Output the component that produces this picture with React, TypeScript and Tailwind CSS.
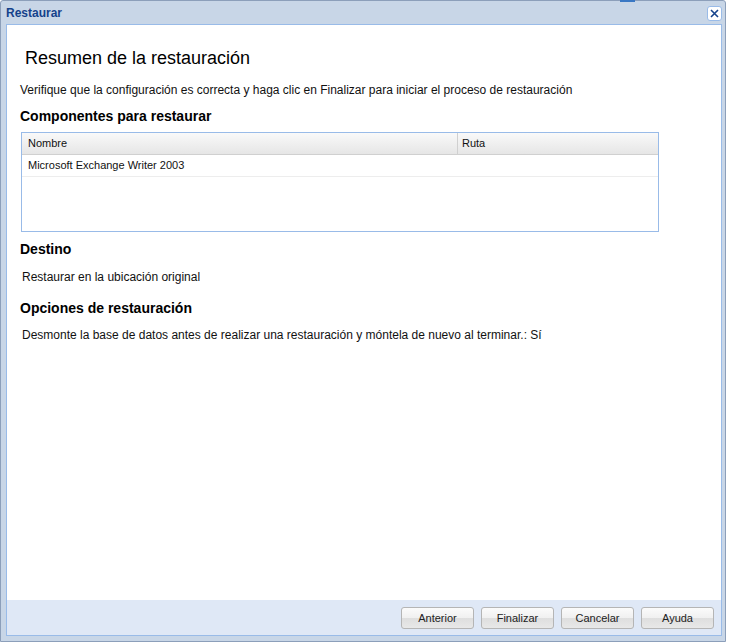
import React from "react";

const font = { fontFamily: '"Liberation Sans", Arial, sans-serif' };

function Btn({ label }: { label: string }) {
  return (
    <div className="w-[73px] h-[22px] rounded-[3px] border border-[#b5b5b5] bg-[linear-gradient(#fbfbfb_0%,#f0f0f0_50%,#dedede_51%,#e8e8e8_100%)] flex items-center justify-center text-[11px] text-[#222]">
      {label}
    </div>
  );
}

export default function App() {
  return (
    <div className="w-[729px] h-[643px] bg-white relative overflow-hidden" style={font}>
      <div className="absolute left-[620px] top-0 w-[15px] h-[2px] bg-[#3a78c4]" />
      <div className="w-[726px] h-[642px] border border-[#8c9fba] rounded-t-[3px] bg-[#c8d6e7] flex flex-col">
        <div className="h-[23px] flex items-center justify-between pl-[5px] pr-[3px]">
          <span className="text-[12px] font-bold text-[#15428b]">Restaurar</span>
          <div className="w-[15px] h-[15px] mt-[2px] rounded-[3px] border border-[#99bbe8] bg-white flex items-center justify-center">
            <svg width="9" height="9" viewBox="0 0 9 9">
              <path d="M1 1L8 8M8 1L1 8" stroke="#15428b" strokeWidth="1.6" />
            </svg>
          </div>
        </div>
        <div className="ml-[5px] w-[716px] h-[612px] border border-[#99bbe8] bg-white flex flex-col">
          <div className="flex-1 pl-[13px] pt-[23px] flex flex-col items-start text-black">
            <div className="ml-[5px] text-[18px] leading-[20px]">Resumen de la restauración</div>
            <div className="mt-[15px] text-[12px] leading-[14px] text-[#111]">
              Verifique que la configuración es correcta y haga clic en Finalizar para iniciar el proceso de restauración
            </div>
            <div className="mt-[11px] text-[14px] leading-[16px] font-bold">Componentes para restaurar</div>
            <div className="mt-[8px] ml-[1px] w-[638px] h-[100px] border border-[#99bbe8] flex flex-col">
              <div className="h-[22px] flex border-b border-[#d0d0d0] bg-[linear-gradient(#f9f9f9,#e6e6e6)] text-[11px] text-[#111]">
                <div className="w-[436px] border-r border-[#d0d0d0] pl-[6px] flex items-center">Nombre</div>
                <div className="flex-1 pl-[4px] flex items-center">Ruta</div>
              </div>
              <div className="h-[22px] flex items-center border-b border-[#ededed] pl-[6px] text-[11px] text-[#111]">
                Microsoft Exchange Writer 2003
              </div>
            </div>
            <div className="mt-[9px] text-[14px] leading-[16px] font-bold">Destino</div>
            <div className="mt-[13px] ml-[2px] text-[12px] leading-[14px] text-[#111]">Restaurar en la ubicación original</div>
            <div className="mt-[16px] text-[14px] leading-[16px] font-bold">Opciones de restauración</div>
            <div className="mt-[12px] ml-[2px] text-[12px] leading-[14px] text-[#111]">
              Desmonte la base de datos antes de realizar una restauración y móntela de nuevo al terminar.: Sí
            </div>
          </div>
          <div className="h-[35px] bg-[#dfe8f6] flex justify-end items-start pt-[7px] pr-[7px] gap-[7px]">
            <Btn label="Anterior" />
            <Btn label="Finalizar" />
            <Btn label="Cancelar" />
            <Btn label="Ayuda" />
          </div>
        </div>
      </div>
    </div>
  );
}
